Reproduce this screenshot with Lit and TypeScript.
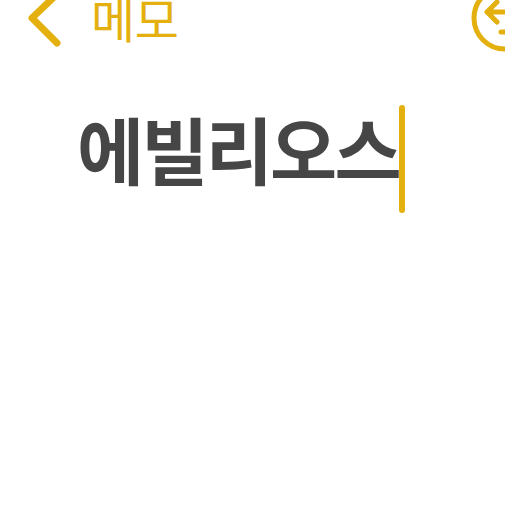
import { LitElement, html, css } from "lit";
import { customElement } from "lit/decorators.js";

@customElement("app-root")
export class AppRoot extends LitElement {
  static styles = css`
    :host { display: block; width: 505px; height: 505px; overflow: hidden; background: #fff; font-family: "Noto Sans CJK KR", "Noto Sans", sans-serif; }
    .header { display: flex; align-items: flex-start; height: 52px; padding-left: 24px; }
    .icon { flex: none; overflow: visible; width: 40px; height: 52px; }
    .title { margin-left: 27px; margin-top: -11px; font-size: 48px; line-height: 56px; color: #e4b010; font-weight: 400; white-space: nowrap; letter-spacing: -0.3px; }
    .spacer { flex: 1; }
    .editor { display: flex; align-items: flex-start; padding: 53px 0 0 77px; }
    .text { font-size: 73px; line-height: 85px; font-weight: 700; color: #464646; white-space: nowrap; letter-spacing: -2.8px; }
    .caret { width: 6px; height: 108px; border-radius: 3px; background: #e4b010; flex: none; margin-left: 0; }
  `;
  render() {
    return html`
      <div class="header">
        <svg class="icon" viewBox="0 0 40 52" fill="none" stroke="#e4b010" stroke-width="7" stroke-linecap="round" stroke-linejoin="round">
          <path d="M29 -2 L8 18 L33 43"></path>
        </svg>
        <div class="title">메모</div>
        <div class="spacer"></div>
        <svg class="icon" viewBox="0 0 40 52" fill="none" stroke="#e4b010" stroke-width="5" stroke-linecap="round" stroke-linejoin="round">
          <circle cx="40" cy="18" r="31"></circle>
          <path d="M32 2 L22 12 L32 22 M22 12 H42"></path>
          <path d="M36 32 H42"></path>
        </svg>
      </div>
      <div class="editor">
        <span class="text">에빌리오스</span>
        <span class="caret"></span>
      </div>
    `;
  }
}
